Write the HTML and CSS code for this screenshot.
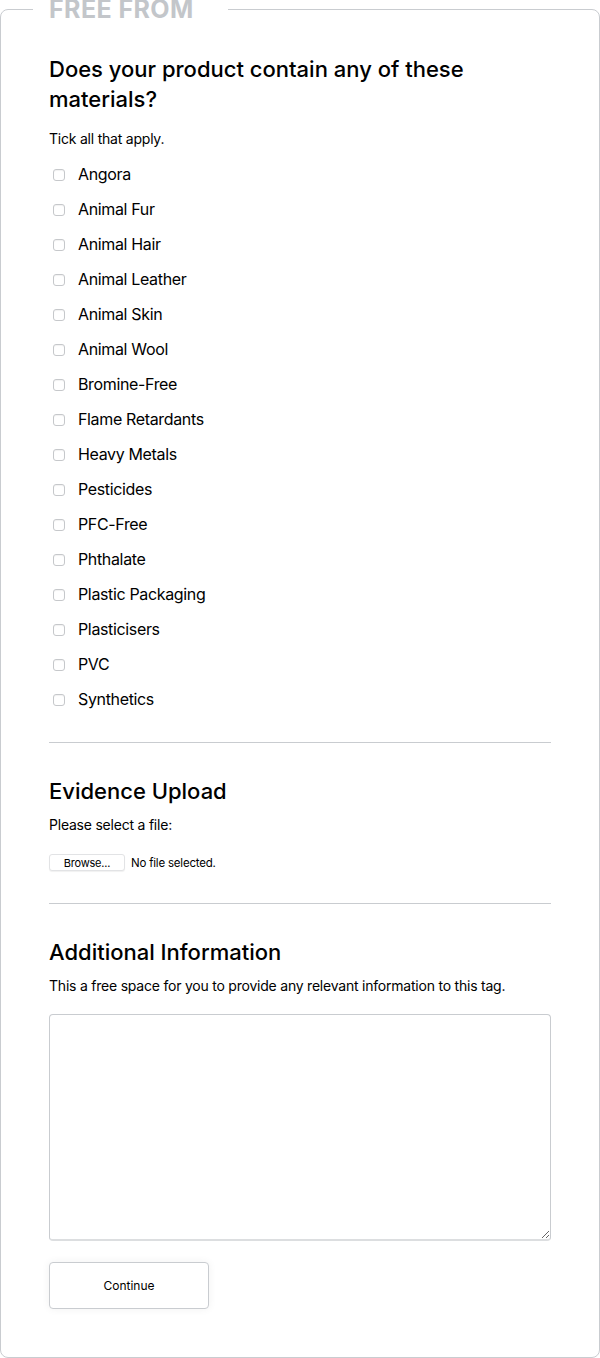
FILE: index.html
```html
<!DOCTYPE html>
<html lang="en">
<head>
    <meta charset="UTF-8">
    <meta name="viewport" content="width=device-width, initial-scale=1.0">
    <title>Free From</title>
    <link rel="stylesheet" href="styles.css">
</head>
<body>
    <form class="tag-form">
        <fieldset class="panel">
            <legend class="panel-title">Free From</legend>

            <section class="materials">
                <h2 class="question">Does your product contain any of these materials?</h2>
                <p class="hint hint-tick">Tick all that apply.</p>
                <ul class="options">
                    <li><label><input type="checkbox" name="material" value="angora"> Angora</label></li>
                    <li><label><input type="checkbox" name="material" value="animal-fur"> Animal Fur</label></li>
                    <li><label><input type="checkbox" name="material" value="animal-hair"> Animal Hair</label></li>
                    <li><label><input type="checkbox" name="material" value="animal-leather"> Animal Leather</label></li>
                    <li><label><input type="checkbox" name="material" value="animal-skin"> Animal Skin</label></li>
                    <li><label><input type="checkbox" name="material" value="animal-wool"> Animal Wool</label></li>
                    <li><label><input type="checkbox" name="material" value="bromine-free"> Bromine-Free</label></li>
                    <li><label><input type="checkbox" name="material" value="flame-retardants"> Flame Retardants</label></li>
                    <li><label><input type="checkbox" name="material" value="heavy-metals"> Heavy Metals</label></li>
                    <li><label><input type="checkbox" name="material" value="pesticides"> Pesticides</label></li>
                    <li><label><input type="checkbox" name="material" value="pfc-free"> PFC-Free</label></li>
                    <li><label><input type="checkbox" name="material" value="phthalate"> Phthalate</label></li>
                    <li><label><input type="checkbox" name="material" value="plastic-packaging"> Plastic Packaging</label></li>
                    <li><label><input type="checkbox" name="material" value="plasticisers"> Plasticisers</label></li>
                    <li><label><input type="checkbox" name="material" value="pvc"> PVC</label></li>
                    <li><label><input type="checkbox" name="material" value="synthetics"> Synthetics</label></li>
                </ul>
            </section>

            <hr class="divider divider-first">

            <section class="evidence">
                <h2 class="question">Evidence Upload</h2>
                <p class="hint">Please select a file:</p>
                <div class="file-picker">
                    <label class="browse">Browse...<input type="file" name="evidence"></label>
                    <span class="file-name">No file selected.</span>
                </div>
            </section>

            <hr class="divider">

            <section class="additional">
                <h2 class="question">Additional Information</h2>
                <p class="hint">This a free space for you to provide any relevant information to this tag.</p>
                <textarea class="notes" name="notes"></textarea>
            </section>

            <button type="button" class="continue">Continue</button>
        </fieldset>
    </form>
</body>
</html>
```

FILE: styles.css
```css
* {
    margin: 0;
    padding: 0;
    box-sizing: border-box;
}

body {
    font-family: Inter, "Noto Sans", sans-serif;
    color: #000;
    background: #fff;
}

.panel {
    width: 600px;
    min-height: 1358px;
    border: 1px solid #c9ccd0;
    border-radius: 8px;
    padding: 36px 48px 48px;
}

.panel-title {
    margin-left: -16px;
    padding: 0 34px 0 16px;
    font-size: 25px;
    line-height: 18px;
    font-weight: 700;
    letter-spacing: 0.4px;
    text-transform: uppercase;
    color: #c3c6ca;
}

.question {
    font-size: 22px;
    line-height: 30px;
    font-weight: 500;
}

.hint {
    font-size: 14px;
    line-height: 20px;
    letter-spacing: -0.22px;
    margin-top: 9px;
}

.hint-tick {
    margin-top: 15px;
}

.options {
    list-style: none;
    margin-top: 8px;
}

.options li {
    height: 35px;
    display: flex;
    align-items: center;
}

.options label {
    display: flex;
    align-items: center;
    font-size: 16px;
    line-height: 35px;
    letter-spacing: -0.35px;
}

.options input {
    appearance: none;
    width: 12px;
    height: 12px;
    margin: 0 13px 0 4px;
    border: 1px solid #c6c8cb;
    border-radius: 3px;
    background: #fff;
    box-shadow: inset 0 1px 1px rgba(0, 0, 0, 0.06);
}

.divider {
    border: 0;
    border-top: 1px solid #c9ccd0;
    margin: 32px 0 33px;
}

.divider-first {
    margin-top: 25px;
}

.file-picker {
    display: flex;
    align-items: center;
    gap: 6px;
    margin-top: 19px;
    font-size: 11.5px;
    letter-spacing: -0.2px;
}

.browse {
    width: 76px;
    height: 17px;
    display: flex;
    align-items: center;
    justify-content: center;
    border: 1px solid #e2e3e5;
    border-radius: 3px;
    background: #fff;
    box-shadow: 0 1px 1px rgba(0, 0, 0, 0.06);
    font-size: 11px;
}

.browse input {
    display: none;
}

.notes {
    display: block;
    width: 100%;
    height: 227px;
    margin-top: 18px;
    border: 1px solid #c9ccd0;
    border-bottom: 2px solid #dcdee0;
    border-radius: 4px;
    font-family: inherit;
    font-size: 14px;
    padding: 8px;
    resize: vertical;
}

.continue {
    display: block;
    width: 160px;
    height: 47px;
    margin-top: 21px;
    border: 1px solid #c9ccd0;
    border-radius: 4px;
    background: #fff;
    box-shadow: 0 0 8px rgba(0, 0, 0, 0.06);
    font-family: inherit;
    font-size: 12px;
    color: #000;
}
```
